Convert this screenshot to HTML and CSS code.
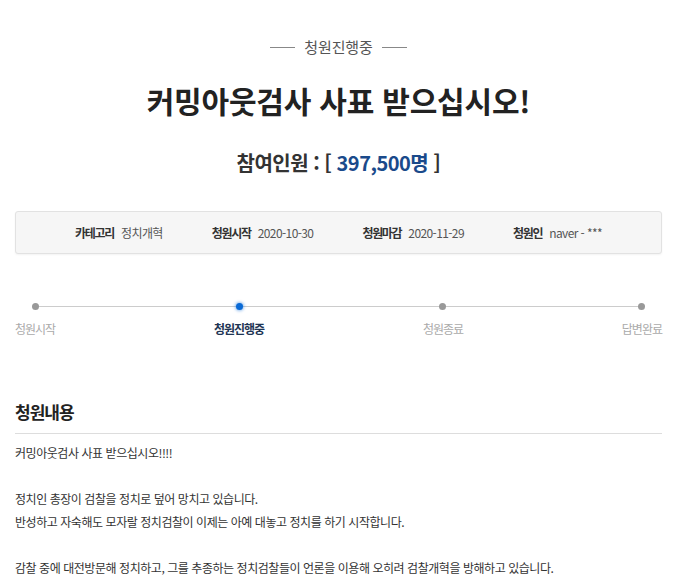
FILE: index.html
```html
<!DOCTYPE html>
<html lang="ko">
<head>
    <meta charset="UTF-8">
    <meta name="viewport" content="width=device-width, initial-scale=1.0">
    <title>청원진행중 - 커밍아웃검사 사표 받으십시오!</title>
    <link rel="stylesheet" href="styles.css">
</head>
<body>
    <div class="wrap">
        <div class="status"><span class="status-text">청원진행중</span></div>
        <h1 class="title">커밍아웃검사 사표 받으십시오!</h1>
        <p class="count">참여인원 : [ <span class="count-num">397,500명</span> ]</p>

        <ul class="info">
            <li><strong>카테고리</strong><span>정치개혁</span></li>
            <li><strong>청원시작</strong><span>2020-10-30</span></li>
            <li><strong>청원마감</strong><span>2020-11-29</span></li>
            <li><strong>청원인</strong><span>naver - ***</span></li>
        </ul>

        <ol class="steps">
            <li class="step"><i class="dot"></i><span>청원시작</span></li>
            <li class="step active"><i class="dot"></i><span>청원진행중</span></li>
            <li class="step"><i class="dot"></i><span>청원종료</span></li>
            <li class="step"><i class="dot"></i><span>답변완료</span></li>
        </ol>

        <h2 class="section-title">청원내용</h2>
        <div class="content">
            커밍아웃검사 사표 받으십시오!!!!<br>
            <br>
            정치인 총장이 검찰을 정치로 덮어 망치고 있습니다.<br>
            반성하고 자숙해도 모자랄 정치검찰이 이제는 아예 대놓고 정치를 하기 시작합니다.<br>
            <br>
            감찰 중에 대전방문해 정치하고, 그를 추종하는 정치검찰들이 언론을 이용해 오히려 검찰개혁을 방해하고 있습니다.
        </div>
    </div>
</body>
</html>
```

FILE: styles.css
```css
body {
    margin: 0;
    font-family: "Noto Sans CJK KR", "Noto Sans", sans-serif;
    color: #333;
    background: #fff;
}
.wrap {
    width: 647px;
    margin-left: 15px;
    padding-top: 37px;
}
.status {
    display: flex;
    justify-content: center;
    align-items: center;
    gap: 9px;
    font-size: 15px;
    line-height: 20px;
    letter-spacing: -0.1px;
    color: #555;
}
.status::before,
.status::after {
    content: "";
    width: 25px;
    height: 1px;
    background: #888;
}
.title {
    margin: 23px 0 0;
    text-align: center;
    font-size: 30px;
    line-height: 40px;
    letter-spacing: -0.2px;
    font-weight: 700;
    color: #222;
}
.count {
    margin: 29px 0 0;
    text-align: center;
    font-size: 20px;
    line-height: 28px;
    font-weight: 700;
    letter-spacing: -0.5px;
    color: #333;
}
.count-num {
    color: #1a4a8b;
}
.info {
    list-style: none;
    margin: 34px 0 0;
    padding: 0;
    height: 41px;
    display: flex;
    justify-content: center;
    align-items: center;
    gap: 49px;
    background: #f6f6f6;
    border: 1px solid #e2e2e2;
    border-radius: 3px;
    box-shadow: 0 1px 2px rgba(0,0,0,0.05);
    font-size: 12px;
}
.info li {
    display: flex;
    gap: 7px;
}
.info strong {
    letter-spacing: -1.3px;
    color: #333;
}
.info span {
    letter-spacing: -0.6px;
    color: #555;
}
.steps {
    list-style: none;
    margin: 49px 0 0;
    padding: 0;
    position: relative;
    display: flex;
    justify-content: space-between;
}
.steps::before {
    content: "";
    position: absolute;
    top: 3px;
    left: 21px;
    right: 21px;
    height: 1px;
    background: #ccc;
}
.step {
    position: relative;
    display: flex;
    flex-direction: column;
    align-items: center;
    gap: 10px;
    font-size: 12px;
    line-height: 18px;
    letter-spacing: -1px;
    color: #aaa;
}
.dot {
    width: 7px;
    height: 7px;
    border-radius: 50%;
    background: #999;
}
.step.active {
    color: #1e3554;
    font-weight: 700;
}
.step.active .dot {
    background: #0a6ad6;
    box-shadow: 0 0 3px 1px rgba(10,106,214,0.45);
}
.section-title {
    margin: 62px 0 0;
    padding-bottom: 9px;
    border-bottom: 1px solid #ddd;
    font-size: 17px;
    line-height: 24px;
    letter-spacing: -1px;
    font-weight: 700;
    color: #222;
}
.content {
    margin-top: 7px;
    font-size: 12px;
    line-height: 23px;
    letter-spacing: -0.45px;
    color: #333;
}
```
